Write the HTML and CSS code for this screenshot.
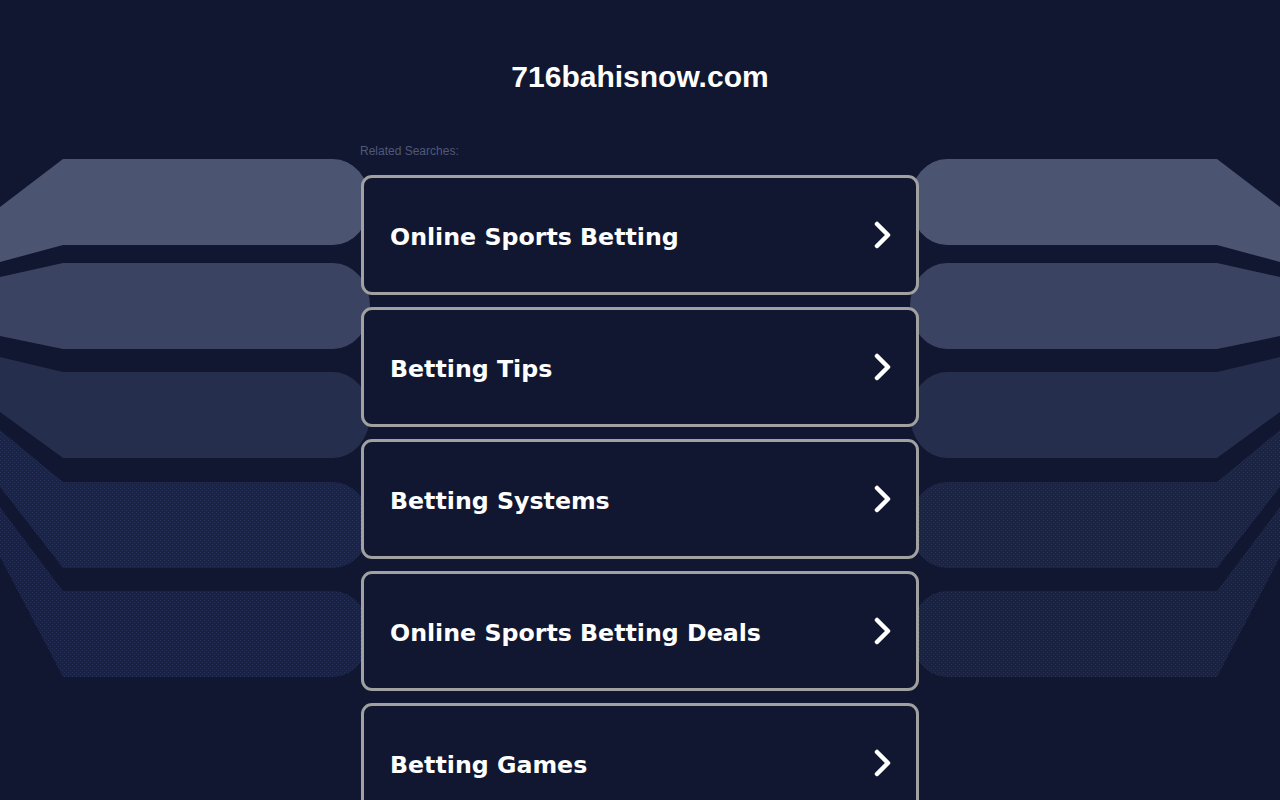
FILE: index.html
```html
<!DOCTYPE html>
<html lang="en">
<head>
<meta charset="utf-8">
<title>716bahisnow.com</title>
<link rel="stylesheet" href="styles.css">
</head>
<body>
<svg class="backdrop" viewBox="0 0 1280 800" width="1280" height="800" aria-hidden="true">
  <defs>
    <pattern id="dots" width="4" height="4" patternUnits="userSpaceOnUse">
      <rect x="0" y="0" width="1" height="1" fill="#2b3662" opacity="0.7"/>
      <rect x="2" y="2" width="1" height="1" fill="#2b3662" opacity="0.7"/>
    </pattern>
    <g id="side">
      <path d="M0,207 L63,159 L333,159 A37,43 0 0 1 333,245 L63,245 L0,262 Z" fill="#4b5572"/>
      <path d="M0,277 L63,263 L333,263 A37,43 0 0 1 333,349 L63,349 L0,336 Z" fill="#3a4361"/>
      <path d="M0,357 L63,372 L333,372 A37,43 0 0 1 333,458 L63,458 L0,412 Z" fill="#252e4d"/>
      <path d="M0,430 L63,482 L333,482 A37,43 0 0 1 333,568 L63,568 L0,487 Z" fill="#1c2444"/>
      <path d="M0,430 L63,482 L333,482 A37,43 0 0 1 333,568 L63,568 L0,487 Z" fill="url(#dots)"/>
      <path d="M0,507 L63,591 L333,591 A37,43 0 0 1 333,677 L63,677 L0,557 Z" fill="#1a2242"/>
      <path d="M0,507 L63,591 L333,591 A37,43 0 0 1 333,677 L63,677 L0,557 Z" fill="url(#dots)"/>
    </g>
  </defs>
  <use href="#side"/>
  <use href="#side" transform="translate(1280,0) scale(-1,1)"/>
</svg>
<div class="page">
  <header class="header">
    <h1 class="domain">716bahisnow.com</h1>
  </header>
  <main class="content">
    <div class="related">Related Searches:</div>
    <ul class="links">
      <li><a class="link" href="#"><span class="label">Online Sports Betting</span><svg class="chev" viewBox="0 0 20 28" width="20" height="28"><path d="M4,3 L15,14 L4,25"/></svg></a></li>
      <li><a class="link" href="#"><span class="label">Betting Tips</span><svg class="chev" viewBox="0 0 20 28" width="20" height="28"><path d="M4,3 L15,14 L4,25"/></svg></a></li>
      <li><a class="link" href="#"><span class="label">Betting Systems</span><svg class="chev" viewBox="0 0 20 28" width="20" height="28"><path d="M4,3 L15,14 L4,25"/></svg></a></li>
      <li><a class="link" href="#"><span class="label">Online Sports Betting Deals</span><svg class="chev" viewBox="0 0 20 28" width="20" height="28"><path d="M4,3 L15,14 L4,25"/></svg></a></li>
      <li><a class="link" href="#"><span class="label">Betting Games</span><svg class="chev" viewBox="0 0 20 28" width="20" height="28"><path d="M4,3 L15,14 L4,25"/></svg></a></li>
    </ul>
  </main>
</div>
</body>
</html>
```

FILE: styles.css
```css
html, body {
  margin: 0;
  padding: 0;
  background: #111730;
}

body {
  position: relative;
  min-height: 800px;
  font-family: "Liberation Sans", Arial, sans-serif;
  overflow-x: hidden;
}

.backdrop {
  position: absolute;
  left: 0;
  top: 0;
  z-index: 0;
  display: block;
}

.page {
  position: relative;
  z-index: 1;
  display: flex;
  flex-direction: column;
  align-items: center;
}

.header {
  padding-top: 59px;
  height: 87px;
  box-sizing: border-box;
}

.domain {
  margin: 0;
  color: #ffffff;
  font-family: "Liberation Sans", Arial, sans-serif;
  font-weight: bold;
  font-size: 30px;
  line-height: 36px;
  text-align: center;
}

.content {
  width: 560px;
  padding-top: 57px;
}

.related {
  color: #4f5979;
  font-size: 12px;
  line-height: 14px;
  margin-bottom: 17px;
}

.links {
  list-style: none;
  margin: 0;
  padding: 0;
  display: flex;
  flex-direction: column;
  gap: 12px;
}

.link {
  display: flex;
  align-items: center;
  justify-content: space-between;
  box-sizing: border-box;
  height: 120px;
  margin-left: 1px;
  width: 558px;
  padding: 0 23px 0 26px;
  border: 3px solid #a1a1a1;
  border-radius: 11px;
  background: #111730;
  text-decoration: none;
}

.label {
  display: block;
  padding-top: 4px;
  color: #ffffff;
  font-family: "DejaVu Sans", Verdana, sans-serif;
  font-weight: bold;
  font-size: 23.7px;
  line-height: 30px;
}

.chev {
  display: block;
  flex: none;
}

.chev path {
  fill: none;
  stroke: #ffffff;
  stroke-width: 4.5;
  stroke-linecap: round;
  stroke-linejoin: round;
}
```
